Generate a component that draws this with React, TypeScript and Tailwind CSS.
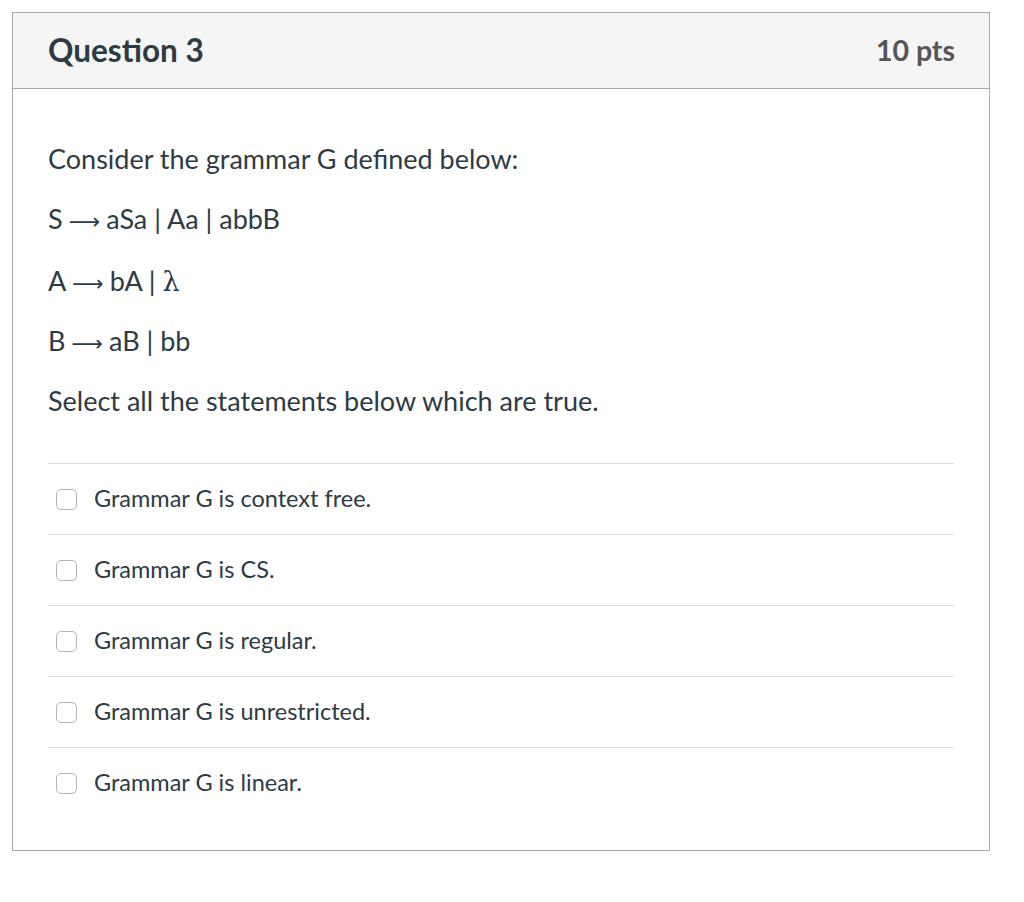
const options = [
  'Grammar G is context free.',
  'Grammar G is CS.',
  'Grammar G is regular.',
  'Grammar G is unrestricted.',
  'Grammar G is linear.',
];

function Arrow() {
  return (
    <span className="mx-[6px] inline-block align-baseline font-['DejaVu_Sans',sans-serif] text-[22px] leading-none">
      ⟶
    </span>
  );
}

export default function App() {
  return (
    <div className="min-h-[902px] bg-white pl-[12px] pt-[12px] font-['Lato',sans-serif]">
      <div className="w-[978px] border border-[#a8a8a8] bg-white">
        <div className="flex h-[76px] items-center justify-between border-b border-[#a8a8a8] bg-[#f5f5f5] pl-[35px] pr-[34px]">
          <h2 className="text-[31.5px] font-bold text-[#2d3b45]">Question 3</h2>
          <span className="text-[28.5px] font-bold text-[#555555]">10 pts</span>
        </div>
        <div className="px-[35px] pb-[32px] pt-[52px] text-[27px] text-[#2d3b45]">
          <p className="h-[36px] leading-[36px]">Consider the grammar G defined below:</p>
          <p className="mt-[24px] h-[36px] leading-[36px]">
            S<Arrow />aSa | Aa | abbB
          </p>
          <p className="mt-[26px] h-[36px] leading-[36px]">
            A<Arrow />bA | <span className="font-['DejaVu_Serif',serif] leading-none">λ</span>
          </p>
          <p className="mt-[24px] h-[36px] leading-[36px]">
            B<Arrow />aB | bb
          </p>
          <p className="mt-[24px] h-[36px] leading-[36px]">Select all the statements below which are true.</p>
          <div className="mt-[44px]">
            {options.map((o) => (
              <div key={o} className="flex h-[71px] items-center border-t border-[#dcdcdc]">
                <span className="ml-[8px] h-[21px] w-[21px] shrink-0 rounded-[5px] border border-[#b5b5b5] bg-white" />
                <span className="ml-[17px] text-[23.5px] text-[#2d3b45]">{o}</span>
              </div>
            ))}
          </div>
        </div>
      </div>
    </div>
  );
}
